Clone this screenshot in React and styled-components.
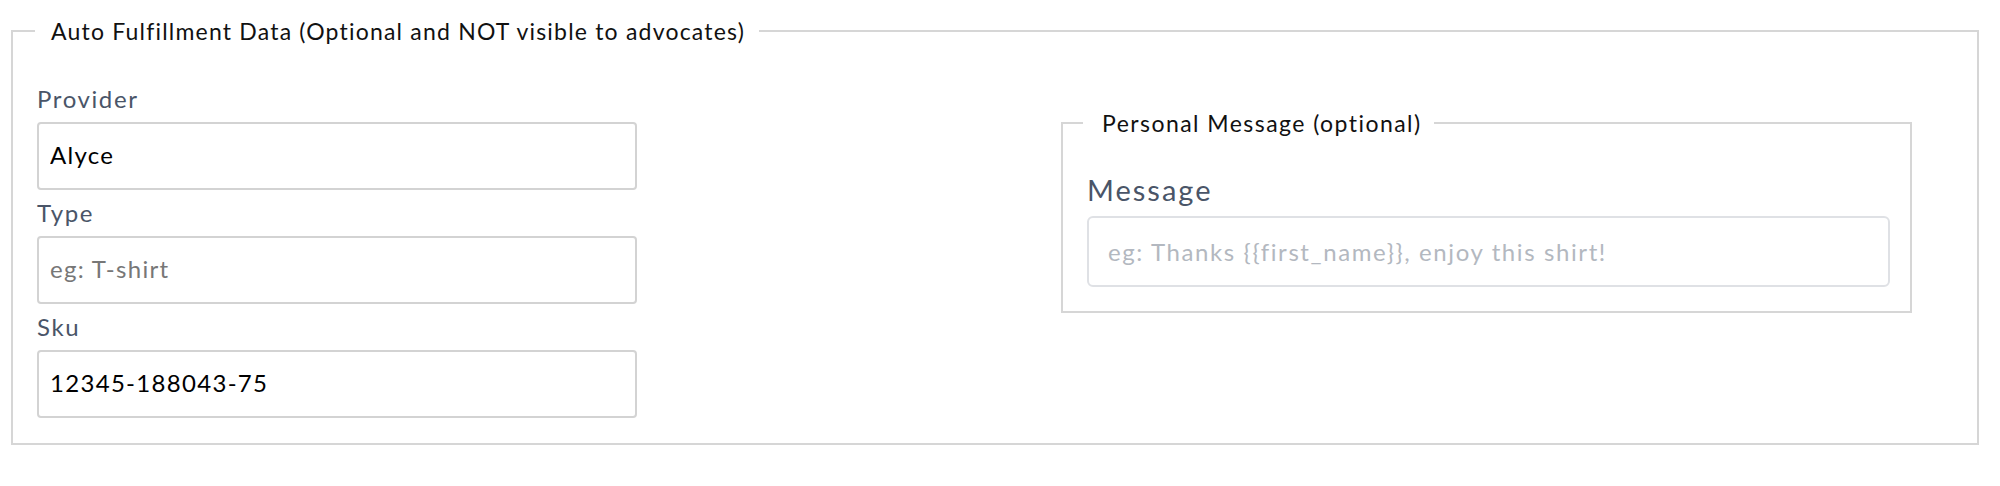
import styled, { createGlobalStyle } from "styled-components";

const GlobalStyle = createGlobalStyle`
  body {
    margin: 0;
    background: #fff;
    font-family: Lato, "Liberation Sans", sans-serif;
  }
`;

export default function App() {
  return (
    <Page>
      <GlobalStyle />
      <Outer>
        <OuterLegend>
          Auto Fulfillment Data (Optional and NOT visible to advocates)
        </OuterLegend>
        <Columns>
          <LeftColumn>
            <Field>
              <Label>Provider</Label>
              <Input defaultValue="Alyce" />
            </Field>
            <Field>
              <Label>Type</Label>
              <Input placeholder="eg: T-shirt" />
            </Field>
            <Field>
              <Label>Sku</Label>
              <Input defaultValue="12345-188043-75" />
            </Field>
          </LeftColumn>
          <Inner>
            <InnerLegend>Personal Message (optional)</InnerLegend>
            <MessageLabel>Message</MessageLabel>
            <MessageInput placeholder="eg: Thanks {{first_name}}, enjoy this shirt!" />
          </Inner>
        </Columns>
      </Outer>
    </Page>
  );
}

const Page = styled.div`
  padding: 17px 0 0 11px;
`;

const Outer = styled.fieldset`
  box-sizing: border-box;
  width: 1968px;
  margin: 0;
  padding: 40px 24px 25px 24px;
  border: 2px solid #d6d6d6;
`;

const OuterLegend = styled.legend`
  margin-left: -2px;
  padding: 0 14px 0 16px;
  font-size: 23px;
  line-height: 28px;
  letter-spacing: 1.2px;
  color: #111;
`;

const Columns = styled.div`
  display: flex;
  align-items: flex-start;
  gap: 424px;
`;

const LeftColumn = styled.div`
  display: flex;
  flex-direction: column;
  gap: 9px;
  width: 600px;
`;

const Field = styled.div`
  display: flex;
  flex-direction: column;
`;

const Label = styled.label`
  font-size: 24px;
  line-height: 28px;
  letter-spacing: 1.6px;
  margin-bottom: 9px;
  color: #4a5568;
`;

const Input = styled.input`
  box-sizing: border-box;
  width: 100%;
  height: 68px;
  padding: 0 11px 4px;
  border: 2px solid #d3d3d3;
  border-radius: 4px;
  font-family: inherit;
  font-size: 24px;
  letter-spacing: 1.3px;
  color: #000;
  outline: none;

  &::placeholder {
    color: #777;
  }
`;

const Inner = styled.fieldset`
  box-sizing: border-box;
  width: 851px;
  margin: 24px 0 0 0;
  padding: 36px 20px 24px 24px;
  border: 2px solid #d6d6d6;
`;

const InnerLegend = styled.legend`
  margin-left: -4px;
  padding: 0 12px 0 19px;
  font-size: 23px;
  line-height: 28px;
  letter-spacing: 1.45px;
  color: #111;
`;

const MessageLabel = styled.label`
  display: block;
  font-size: 29px;
  line-height: 34px;
  letter-spacing: 2px;
  margin-bottom: 9px;
  color: #4a5568;
`;

const MessageInput = styled.input`
  box-sizing: border-box;
  width: 100%;
  height: 71px;
  padding: 0 19px;
  border: 2px solid #dfe1e5;
  border-radius: 6px;
  font-family: inherit;
  font-size: 24px;
  letter-spacing: 1.6px;
  color: #000;
  outline: none;

  &::placeholder {
    color: #b3b8c0;
  }
`;
